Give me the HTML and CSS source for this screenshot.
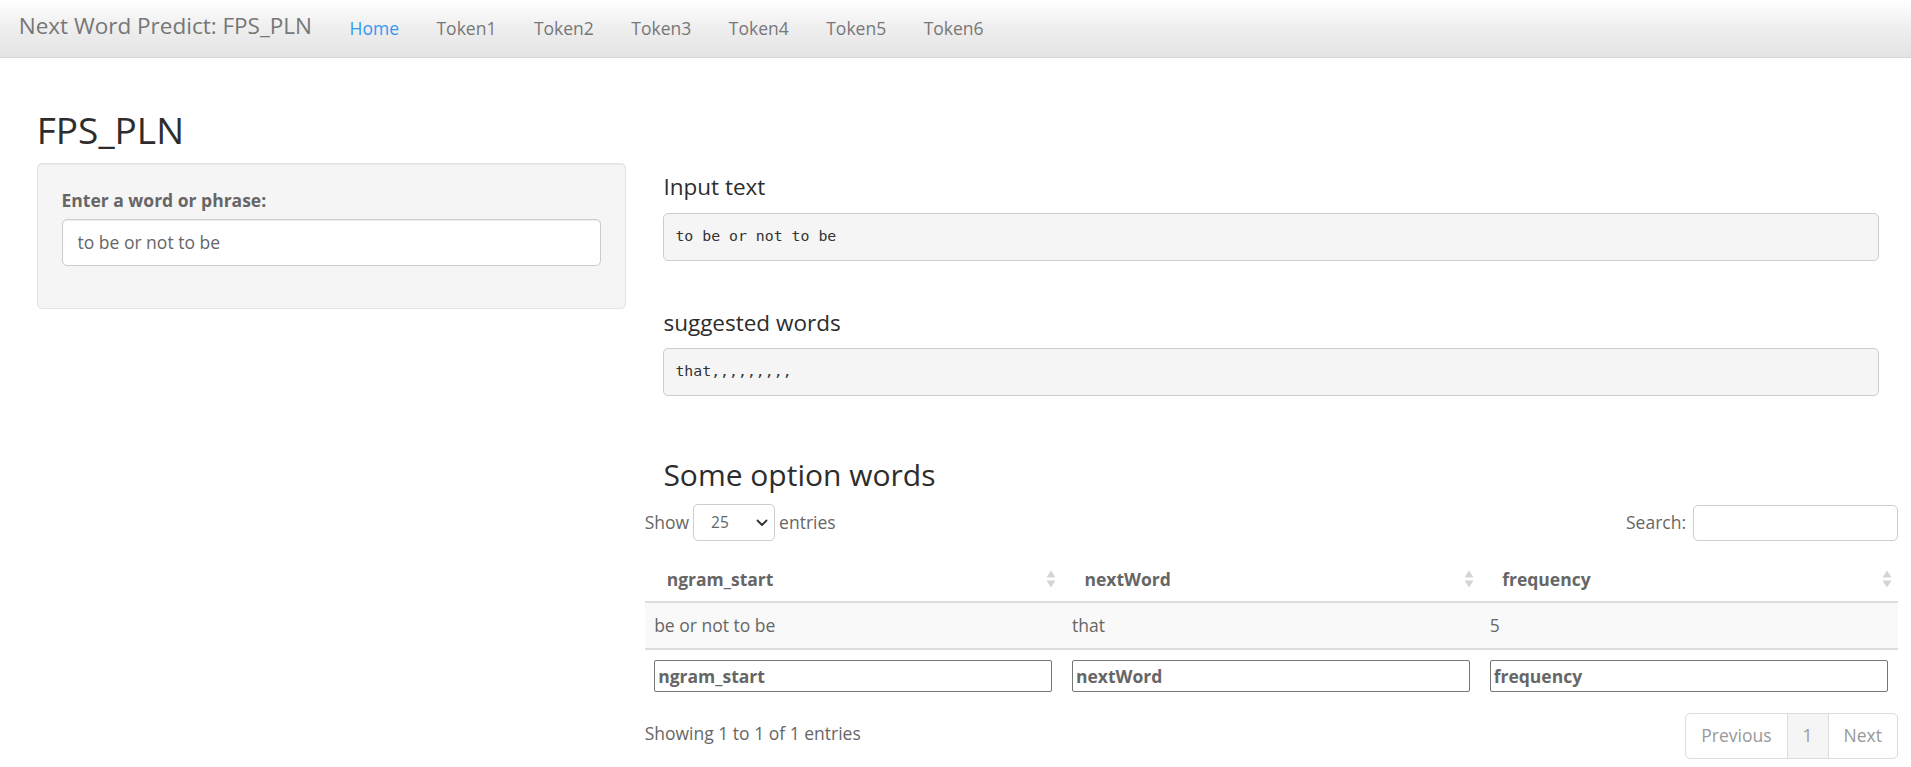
FILE: index.html
```html
<!DOCTYPE html>
<html lang="en">
<head>
<meta charset="utf-8">
<title>Next Word Predict: FPS_PLN</title>
<link rel="stylesheet" href="styles.css">
</head>
<body>
<nav class="navbar">
  <span class="brand">Next Word Predict: FPS_PLN</span>
  <ul class="nav">
    <li class="active"><a href="#">Home</a></li>
    <li><a href="#">Token1</a></li>
    <li><a href="#">Token2</a></li>
    <li><a href="#">Token3</a></li>
    <li><a href="#">Token4</a></li>
    <li><a href="#">Token5</a></li>
    <li><a href="#">Token6</a></li>
  </ul>
</nav>
<div class="page">
  <h2 class="title">FPS_PLN</h2>
  <div class="row">
    <div class="col">
      <div class="well">
        <label class="lbl" for="phrase">Enter a word or phrase:</label>
        <input id="phrase" class="form-control" type="text" value="to be or not to be">
      </div>
    </div>
    <div class="col">
      <h4 class="out-title">Input text</h4>
      <pre class="out">to be or not to be</pre>
      <h4 class="out-title second">suggested words</h4>
      <pre class="out">that,,,,,,,,,</pre>
      <h3 class="table-title">Some option words</h3>
      <div class="dt">
        <div class="dt-top">
          <div class="dt-length">
            <span>Show</span>
            <div class="select"><span>25</span><svg width="12" height="8" viewBox="0 0 12 8"><polyline points="1.5,1.5 6,6 10.5,1.5" fill="none" stroke="#333" stroke-width="1.8" stroke-linecap="round" stroke-linejoin="round"/></svg></div>
            <span>entries</span>
          </div>
          <div class="dt-search">
            <span>Search:</span>
            <input class="search" type="search">
          </div>
        </div>
        <table class="table">
          <thead>
            <tr>
              <th><span class="sort"><svg width="10" height="18" viewBox="0 0 10 18"><path d="M5 0.5 L9.5 7.5 H0.5 Z" fill="#000" fill-opacity="0.17"/><path d="M5 17.5 L9.5 10.5 H0.5 Z" fill="#000" fill-opacity="0.17"/></svg></span>ngram_start</th>
              <th><span class="sort"><svg width="10" height="18" viewBox="0 0 10 18"><path d="M5 0.5 L9.5 7.5 H0.5 Z" fill="#000" fill-opacity="0.17"/><path d="M5 17.5 L9.5 10.5 H0.5 Z" fill="#000" fill-opacity="0.17"/></svg></span>nextWord</th>
              <th><span class="sort"><svg width="10" height="18" viewBox="0 0 10 18"><path d="M5 0.5 L9.5 7.5 H0.5 Z" fill="#000" fill-opacity="0.17"/><path d="M5 17.5 L9.5 10.5 H0.5 Z" fill="#000" fill-opacity="0.17"/></svg></span>frequency</th>
            </tr>
          </thead>
          <tbody>
            <tr>
              <td>be or not to be</td>
              <td>that</td>
              <td>5</td>
            </tr>
          </tbody>
          <tfoot>
            <tr>
              <td><input class="filter" type="text" value="ngram_start"></td>
              <td><input class="filter" type="text" value="nextWord"></td>
              <td><input class="filter" type="text" value="frequency"></td>
            </tr>
          </tfoot>
        </table>
        <div class="dt-bottom">
          <div class="info">Showing 1 to 1 of 1 entries</div>
          <ul class="pagination">
            <li class="disabled"><a href="#">Previous</a></li>
            <li class="current"><a href="#">1</a></li>
            <li class="disabled"><a href="#">Next</a></li>
          </ul>
        </div>
      </div>
    </div>
  </div>
</div>
</body>
</html>
```
FILE: styles.css
```css
* { box-sizing: border-box; }

html, body { margin: 0; padding: 0; }

body {
  font-family: "Open Sans", "Helvetica Neue", Arial, sans-serif;
  font-size: 17.5px;
  line-height: 25px;
  color: #666;
  background: #fff;
}

/* navbar */
.navbar {
  height: 58px;
  display: flex;
  align-items: flex-start;
  background: linear-gradient(#ffffff, #eeeeee 50%, #e4e4e4);
  border-bottom: 1px solid #d5d5d5;
}
.brand {
  padding: 0 18.75px;
  font-size: 22.5px;
  line-height: 52px;
  color: #777;
  white-space: nowrap;
}
.nav {
  list-style: none;
  margin: 0;
  padding: 0;
  display: flex;
}
.nav a {
  display: block;
  padding: 0 18.75px;
  line-height: 57px;
  color: #777;
  text-decoration: none;
}
.nav .active a { color: #3399f3; }

/* page layout */
.page { padding: 51px 13px 0 18px; }
.title {
  margin: 0 18.75px 12.5px;
  font-size: 37px;
  line-height: 41.25px;
  font-weight: 400;
  color: #2d2d2d;
}
.row {
  display: grid;
  grid-template-columns: 1fr 2fr;
}
.col { padding: 0 18.75px; min-width: 0; }

/* sidebar */
.well {
  background: #f5f5f5;
  border: 1px solid #e3e3e3;
  border-radius: 5px;
  padding: 23.75px;
  box-shadow: inset 0 1px 1px rgba(0,0,0,.05);
}
.lbl {
  display: block;
  font-weight: 700;
  margin-bottom: 6.25px;
}
.form-control {
  display: block;
  width: 100%;
  height: 47px;
  margin: 0 0 18.75px;
  padding: 0 15px;
  border: 1px solid #ccc;
  border-radius: 5px;
  font: inherit;
  color: #666;
  background: #fff;
  box-shadow: inset 0 1px 1px rgba(0,0,0,.075);
}

/* outputs */
.out-title {
  margin: 12.5px 0;
  font-size: 22.5px;
  line-height: 24.75px;
  font-weight: 400;
  color: #2d2d2d;
}
.out-title.second { margin-top: 50px; }
.out {
  margin: 0 0 12.5px;
  padding: 11.5px 11px;
  font-family: "DejaVu Sans Mono", "Liberation Mono", monospace;
  font-size: 14.85px;
  line-height: 23.2px;
  color: #333;
  background: #f5f5f5;
  border: 1px solid #ccc;
  border-radius: 5px;
}
.table-title {
  margin: 62px 0 12.5px;
  font-size: 30px;
  line-height: 33px;
  font-weight: 400;
  color: #2d2d2d;
}

/* datatable */
.dt { margin: 0 -18.75px; }
.dt-top {
  display: flex;
  justify-content: space-between;
  align-items: center;
  height: 38px;
}
.dt-length {
  display: flex;
  align-items: center;
  gap: 4px;
}
.select {
  display: flex;
  align-items: center;
  justify-content: space-between;
  width: 82px;
  height: 37px;
  padding: 0 6px 0 17px;
  border: 1px solid #ccc;
  border-radius: 5px;
  background: #fff;
  font-size: 15.5px;
  color: #666;
}
.dt-search {
  display: flex;
  align-items: center;
  gap: 7px;
}
.search {
  width: 205px;
  height: 36px;
  border: 1px solid #ccc;
  border-radius: 5px;
  background: #fff;
  font: inherit;
}

.table {
  width: 100%;
  margin-top: 13.5px;
  border-collapse: collapse;
  table-layout: fixed;
}
.table th {
  text-align: left;
  font-weight: 700;
  padding: 11.5px 6px 9.5px 22px;
  border-bottom: 2px solid #ddd;
}
.sort {
  float: right;
  display: flex;
  align-items: center;
  height: 25px;
}
.table tbody td {
  padding: 10px 10px 10px 9.5px;
  background: #f9f9f9;
  border-bottom: 2px solid #ddd;
}
.table tfoot td {
  padding: 9.5px 10px 9px 9.5px;
}
.filter {
  display: block;
  width: 100%;
  height: 32px;
  padding: 0 3px;
  border: 1px solid #767676;
  border-radius: 2px;
  font: inherit;
  font-weight: 700;
  color: #666;
  background: #fff;
}

.dt-bottom {
  display: flex;
  justify-content: space-between;
  align-items: flex-start;
  margin-top: 12px;
}
.info { padding-top: 8px; }
.pagination {
  list-style: none;
  margin: 0;
  padding: 0;
  display: flex;
}
.pagination a {
  display: block;
  padding: 9.5px 15px;
  margin-left: -1px;
  border: 1px solid #ddd;
  color: #999;
  text-decoration: none;
  background: #fff;
}
.pagination li:first-child a { margin-left: 0; border-radius: 5px 0 0 5px; }
.pagination li:last-child a { border-radius: 0 5px 5px 0; }
.pagination .current a { background: #f5f5f5; }
```
